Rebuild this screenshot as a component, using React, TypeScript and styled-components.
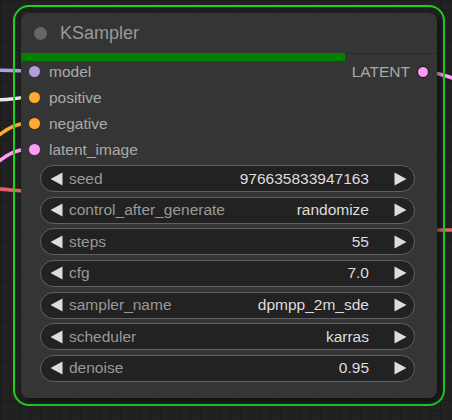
import React from 'react'
import styled, { createGlobalStyle } from 'styled-components'

const GlobalStyle = createGlobalStyle`
  html, body {
    margin: 0;
    padding: 0;
    background: #222;
  }
  body {
    font-family: "Liberation Sans", Arial, sans-serif;
  }
`

const Canvas = styled.div`
  position: relative;
  width: 452px;
  height: 420px;
  overflow: hidden;
  box-sizing: border-box;
  padding: 5px 0 0 13px;
  background-color: #222;
  background-image:
    linear-gradient(to right, #1c1c1c 1px, transparent 1px),
    linear-gradient(to bottom, #1c1c1c 1px, transparent 1px);
  background-size: 10px 10px;
`

const Wires = styled.svg`
  position: absolute;
  left: 0;
  top: 0;
  width: 452px;
  height: 420px;
  z-index: 0;
`

const Selection = styled.div`
  position: relative;
  z-index: 1;
  box-sizing: border-box;
  width: 432px;
  height: 401px;
  padding: 6px;
  border: 2px solid #1fcf1f;
  border-radius: 16px;
`

const Node = styled.div`
  display: flex;
  flex-direction: column;
  height: 100%;
  background: #353535;
  border-radius: 8px;
  box-shadow: 3px 3px 6px rgba(0, 0, 0, 0.55);
`

const Title = styled.div`
  display: flex;
  align-items: center;
  gap: 13px;
  height: 40px;
  padding-left: 13px;
  color: #999;
  font-size: 18px;
`

const TitleDot = styled.span`
  width: 13px;
  height: 13px;
  border-radius: 50%;
  background: #666;
`

const Track = styled.div`
  display: flex;
  height: 8px;
  background: linear-gradient(#2a2a2a 0 1px, transparent 1px);
`

const Fill = styled.div<{ $pct: number }>`
  width: ${p => p.$pct}%;
  background: #008000;
`

const Slots = styled.div`
  display: grid;
  grid-template-columns: 1fr auto;
  grid-auto-rows: 21px;
  row-gap: 5px;
  color: #aaa;
  font-size: 15.5px;
`

const Slot = styled.div<{ $out?: boolean }>`
  display: flex;
  align-items: center;
  justify-content: ${p => (p.$out ? 'flex-end' : 'flex-start')};
  gap: ${p => (p.$out ? 7 : 9)}px;
  padding: ${p => (p.$out ? '0 8px 0 0' : '0 0 0 8px')};
`

const Dot = styled.span<{ $color: string; $out?: boolean }>`
  box-sizing: border-box;
  width: ${p => (p.$out ? 12 : 11)}px;
  height: ${p => (p.$out ? 12 : 11)}px;
  border-radius: 50%;
  background: ${p => p.$color};
  border: ${p => (p.$out ? '1.5px solid #111' : 'none')};
`

const Widgets = styled.div`
  display: flex;
  flex-direction: column;
  gap: 4.67px;
  margin: 5px 0 0 19px;
  width: 375px;
`

const Widget = styled.div`
  display: flex;
  align-items: center;
  box-sizing: border-box;
  height: 27px;
  padding: 0 7px 0 9px;
  background: #222;
  border: 1px solid #616161;
  border-radius: 14px;
  font-size: 15.5px;
`

const Label = styled.span`
  flex: 1;
  margin-left: 6px;
  color: #999;
  white-space: nowrap;
`

const Value = styled.span`
  margin-right: 25px;
  color: #ddd;
  white-space: nowrap;
`

const Arrow = ({ dir }: { dir: 'left' | 'right' }) => (
  <svg width="13" height="14" viewBox="0 0 13 14">
    {dir === 'left'
      ? <polygon points="12.5,0.5 0.5,7 12.5,13.5" fill="#ddd" />
      : <polygon points="0.5,0.5 12.5,7 0.5,13.5" fill="#ddd" />}
  </svg>
)

const inputs = [
  { name: 'model', color: '#b39ddb' },
  { name: 'positive', color: '#ffa931' },
  { name: 'negative', color: '#ffa931' },
  { name: 'latent_image', color: '#ff9cf9' },
]

const widgets = [
  ['seed', '976635833947163'],
  ['control_after_generate', 'randomize'],
  ['steps', '55'],
  ['cfg', '7.0'],
  ['sampler_name', 'dpmpp_2m_sde'],
  ['scheduler', 'karras'],
  ['denoise', '0.95'],
]

export default function App() {
  return (
    <>
      <GlobalStyle />
      <Canvas>
        <Wires viewBox="0 0 452 420">
          <g fill="none" strokeWidth="3.5" strokeLinecap="round">
            <path d="M-5 70 L30 71" stroke="#b39ddb" />
            <path d="M-5 100 C8 100 14 98 30 97" stroke="#e8e8e8" />
            <path d="M-5 138 C6 130 12 124 30 123" stroke="#ffa931" />
            <path d="M-5 164 C6 156 12 150 30 149" stroke="#ff9cf9" />
            <path d="M-5 189 C8 189 14 191 30 191" stroke="#e06666" />
            <path d="M425 71 C436 72 444 76 460 80" stroke="#ff9cf9" />
            <path d="M425 230 L460 230" stroke="#e06666" />
          </g>
        </Wires>
        <Selection>
          <Node>
            <Title>
              <TitleDot />
              KSampler
            </Title>
            <Track>
              <Fill $pct={78} />
            </Track>
            <Slots>
              {inputs.map((s, i) => (
                <React.Fragment key={s.name}>
                  <Slot>
                    <Dot $color={s.color} />
                    {s.name}
                  </Slot>
                  {i === 0 ? (
                    <Slot $out>
                      LATENT
                      <Dot $out $color="#ff9cf9" />
                    </Slot>
                  ) : <span />}
                </React.Fragment>
              ))}
            </Slots>
            <Widgets>
              {widgets.map(([name, val]) => (
                <Widget key={name}>
                  <Arrow dir="left" />
                  <Label>{name}</Label>
                  <Value>{val}</Value>
                  <Arrow dir="right" />
                </Widget>
              ))}
            </Widgets>
          </Node>
        </Selection>
      </Canvas>
    </>
  )
}
